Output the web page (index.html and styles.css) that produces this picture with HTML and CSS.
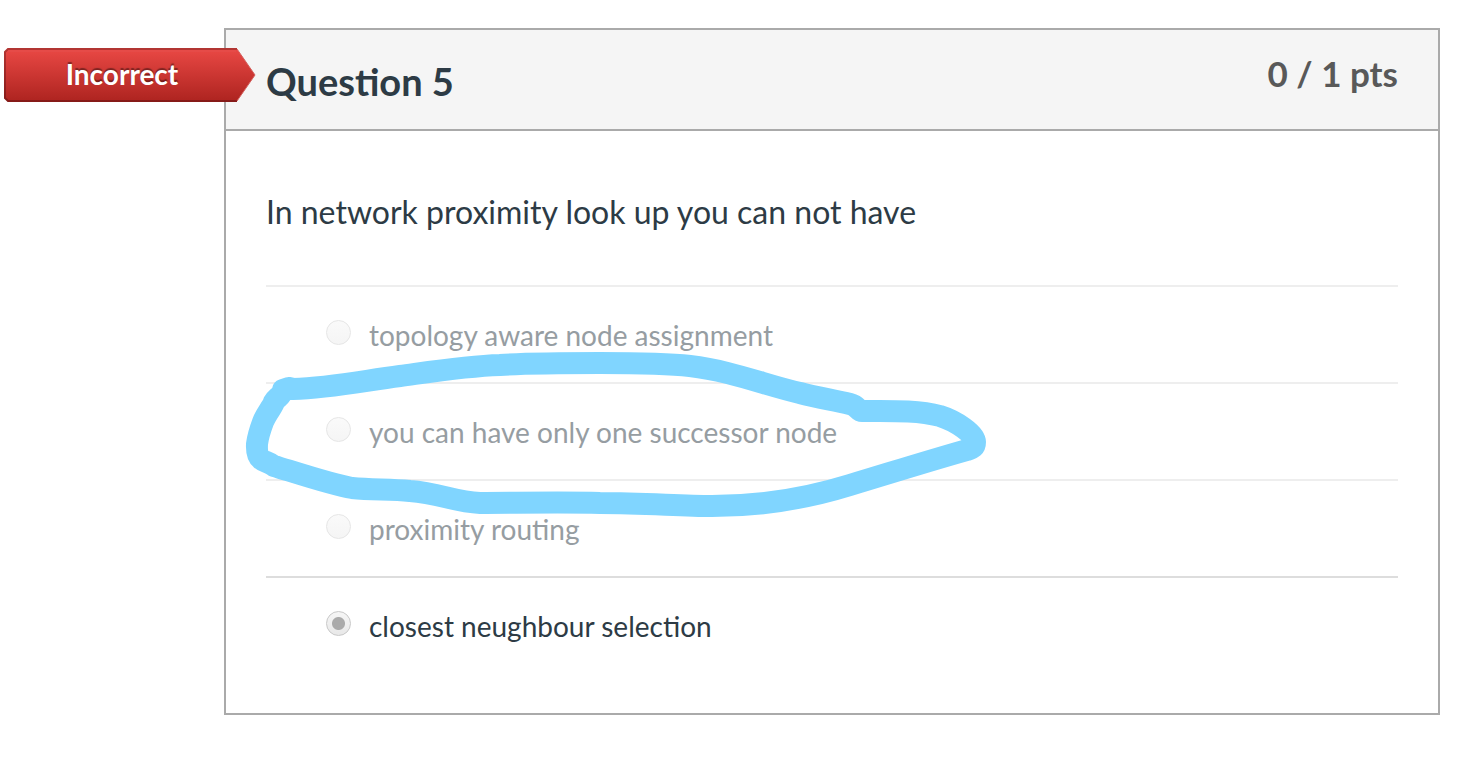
FILE: index.html
```html
<!DOCTYPE html>
<html lang="en">
<head>
<meta charset="utf-8">
<meta name="viewport" content="width=device-width, initial-scale=1">
<title>Question 5</title>
<link rel="stylesheet" href="styles.css">
</head>
<body>
<main class="quiz">
  <section class="question">
    <div class="ribbon">
      <svg class="ribbon-shape" viewBox="0 0 252 54" aria-hidden="true">
        <defs>
          <linearGradient id="ribbon-fill" x1="0" y1="0" x2="0" y2="1">
            <stop offset="0" stop-color="#e94844"/>
            <stop offset="1" stop-color="#ae2420"/>
          </linearGradient>
          <linearGradient id="ribbon-edge" x1="0" y1="0" x2="0" y2="1">
            <stop offset="0" stop-color="#b23532"/>
            <stop offset="1" stop-color="#861a18"/>
          </linearGradient>
        </defs>
        <path d="M4 1H233L251 27L233 53H4L1 50V4Z" fill="url(#ribbon-fill)"/>
        <path d="M233 1H4L1 4V50L4 53H233" fill="none" stroke="url(#ribbon-edge)" stroke-width="2"/>
        <path d="M233 1L251 27L233 53" fill="none" stroke="#d4615e" stroke-width="1"/>
        <path d="M4 3H232" stroke="#e4514e" stroke-width="1"/>
      </svg>
      <span class="ribbon-text">Incorrect</span>
    </div>
    <header class="question-header">
      <h1 class="question-name">Question 5</h1>
      <span class="points">0 / 1 pts</span>
    </header>
    <fieldset class="question-body">
      <legend class="question-text">In network proximity look up you can not have</legend>
      <div class="answers">
        <label class="answer"><input class="radio" type="radio" name="answer" disabled><span>topology aware node assignment</span></label>
        <label class="answer"><input class="radio" type="radio" name="answer" disabled><span>you can have only one successor node</span></label>
        <label class="answer"><input class="radio" type="radio" name="answer" disabled><span>proximity routing</span></label>
        <label class="answer selected"><input class="radio" type="radio" name="answer" disabled checked><span>closest neughbour selection</span></label>
      </div>
    </fieldset>
    <svg class="marker" viewBox="240 340 760 190" aria-hidden="true">
      <path d="M289 388L293 389C330 388 362 381 400 376C436 371 467 366 500 365C530 363 565 363 600 363C630 363 664 363 690 366C732 371 765 385 800 393C819 398 834 400 850 404C858 406 858 411 862 411C890 411 918 410 940 416C956 421 975 434 975 442C975 447 973 448 967 450C928 461 890 473 850 485C805 499 758 506 712 506C680 506 645 503 600 503C560 502 515 503 480 503C455 502 439 493 410 491C390 489 372 490 352 488C333 485 300 474 274 466C269 462 264 462 261 459C256 455 257 447 257 444C258 436 260 430 263 422C266 414 273 406 274 402C276 398 282 396 283 390L289 388"/>
    </svg>
  </section>
</main>
</body>
</html>
```
FILE: styles.css
```css
* {
  box-sizing: border-box;
}

body {
  margin: 0;
  background: #fff;
  color: #2d3b45;
  font-family: Lato, "Liberation Sans", sans-serif;
}

.quiz {
  padding: 28px 42px 48px 224px;
}

.question {
  position: relative;
  border: 2px solid #aaa;
}

.question-header {
  display: flex;
  justify-content: space-between;
  align-items: flex-start;
  padding: 19px 40px 20px;
  border-bottom: 2px solid #aaa;
  background: #f5f5f5;
}

.question-name {
  margin: 8px 0 4px;
  font-size: 38px;
  font-weight: 700;
  line-height: 48px;
}

.points {
  color: #595959;
  font-size: 35px;
  font-weight: 700;
  line-height: 48px;
}

.ribbon {
  position: absolute;
  top: 18px;
  left: -222px;
  width: 252px;
  height: 54px;
}

.ribbon-shape {
  display: block;
  width: 100%;
  height: 100%;
}

.ribbon-text {
  position: absolute;
  inset: 0 16px 0 0;
  color: #fff;
  font-size: 28px;
  font-weight: 700;
  line-height: 52px;
  text-align: center;
  text-shadow: 0 -2px 1px rgba(0, 0, 0, 0.4);
}

.question-body {
  min-width: 0;
  margin: 0;
  padding: 57px 40px 40px;
  border: 0;
}

.question-text {
  float: left;
  width: 100%;
  margin-bottom: 49px;
  padding: 0;
  font-size: 32px;
  line-height: 48px;
}

.answers {
  clear: both;
}

.answer {
  display: flex;
  align-items: flex-start;
  gap: 18px;
  padding: 30px 60px 29px;
  border-top: 2px solid #eee;
  color: #969da2;
  font-size: 28px;
  line-height: 36px;
}

.answer.selected {
  border-top-color: #ddd;
  color: #2d3b45;
}

.radio {
  appearance: none;
  flex: none;
  width: 25px;
  height: 25px;
  margin: 3px 0 0;
  border: 1px solid #e6e6e6;
  border-radius: 50%;
  background: linear-gradient(#fafafa, #f5f5f5);
}

.radio:checked {
  border-color: #c8c8c8;
  background: radial-gradient(circle, #aaa 6px, transparent 7px), linear-gradient(#f6f6f6, #e8e8e8);
}

.marker {
  position: absolute;
  top: 310px;
  left: 14px;
  width: 760px;
  height: 190px;
  pointer-events: none;
}

.marker path {
  fill: none;
  stroke: #80d5ff;
  stroke-width: 22;
  stroke-linecap: round;
  stroke-linejoin: round;
}
```
